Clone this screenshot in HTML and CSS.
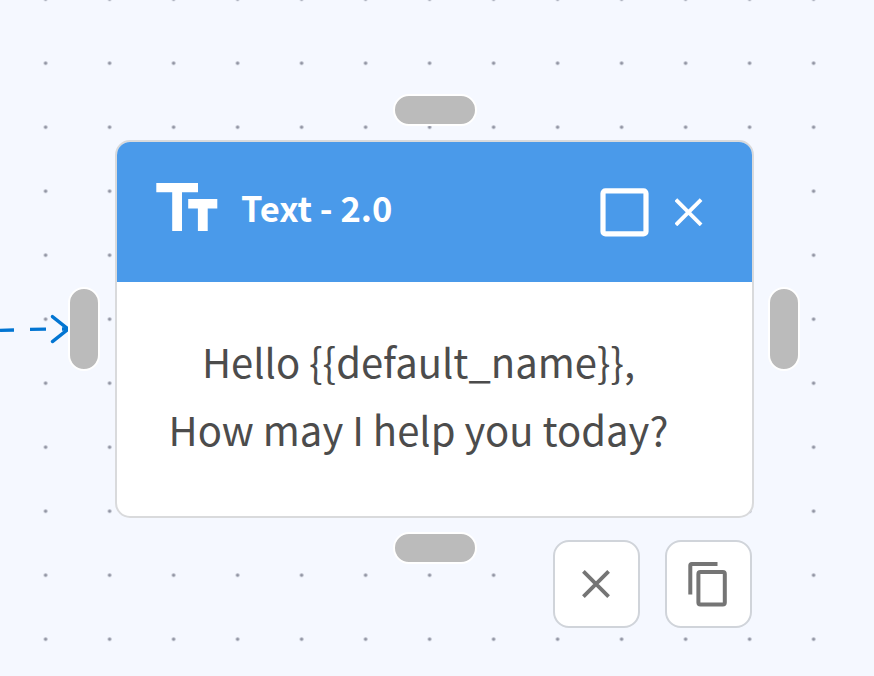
FILE: index.html
```html
<!DOCTYPE html>
<html lang="en">
<head>
  <meta charset="UTF-8">
  <title>Flow Builder</title>
  <link rel="stylesheet" href="styles.css">
</head>
<body>
  <div class="canvas">

    <!-- Background dots -->
    <svg class="grid" width="874" height="676">
      <defs>
        <pattern id="dots" x="13.6" y="31.2" width="64" height="64" patternUnits="userSpaceOnUse">
          <circle cx="32" cy="32" r="1.8" fill="#8f93a1"/>
        </pattern>
      </defs>
      <rect width="874" height="676" fill="url(#dots)"/>
    </svg>

    <!-- Incoming connection -->
    <svg class="edge" width="80" height="60" viewBox="0 300 80 60" fill="none" stroke="#0275d2" stroke-width="3.3">
      <path d="M0 330.4L14 330M30 329.4L46 329.1M62 329L69 329"/>
      <path d="M52.4 316.6L68.2 329.1L52.4 341.6" stroke-linecap="round" stroke-linejoin="round"/>
    </svg>

    <!-- Text node -->
    <div class="node">
      <div class="node-header">
        <svg class="icon-text" width="62" height="48" viewBox="0 0 62 48" fill="#fff">
          <path d="M0.3 0H42V9.3H26V48H16.2V9.3H0.3Z"/>
          <path d="M32.2 16H61.3V25.5H51.7V48H41.9V25.5H32.2Z"/>
        </svg>
        <span class="node-title">Text - 2.0</span>
        <svg class="icon-check" width="49" height="49" viewBox="0 0 49 49" fill="none" stroke="#fff" stroke-width="5.2">
          <rect x="3" y="2.9" width="43" height="43" rx="2.5"/>
        </svg>
        <svg class="icon-close" width="28" height="28" viewBox="0.5 -0.3 28 28" stroke="#fff" stroke-width="3.8">
          <path d="M1.4 1.4L26.6 26.6M26.6 1.4L1.4 26.6"/>
        </svg>
      </div>
      <div class="node-body">
        <p>Hello {{default_name}},</p>
        <p>How may I help you today?</p>
      </div>
      <div class="handle handle-top"></div>
      <div class="handle handle-right"></div>
      <div class="handle handle-bottom"></div>
      <div class="handle handle-left"></div>

      <div class="node-actions">
        <button class="action">
          <svg width="28" height="28" viewBox="0 0 28 28" stroke="#757575" stroke-width="3.8">
            <path d="M1.4 1.4L26.6 26.6M26.6 1.4L1.4 26.6"/>
          </svg>
        </button>
        <button class="action">
          <svg width="40" height="46" viewBox="0 0 40 46" fill="none" stroke="#757575" stroke-width="4">
            <path d="M2.3 33.5V4.5Q2.3 3 3.8 3H29.5"/>
            <rect x="10.4" y="11.1" width="26.4" height="32.3" rx="2"/>
          </svg>
        </button>
      </div>
    </div>

  </div>
</body>
</html>
```
FILE: styles.css
```css
body {
    margin: 0;
    font-family: "Noto Sans CJK JP", "Noto Sans", sans-serif;
}
.canvas {
    position: relative;
    width: 874px;
    height: 676px;
    background: #f5f8ff;
    overflow: hidden;
}
.grid {
    display: block;
}
.edge {
    position: absolute;
    left: 0;
    top: 300px;
}
.node {
    position: absolute;
    left: 115px;
    top: 140px;
    box-sizing: border-box;
    width: 639px;
    height: 378px;
    border: 2px solid #d9dadc;
    border-radius: 15px;
    background: #fff;
}
.node-header {
    display: flex;
    align-items: center;
    box-sizing: border-box;
    height: 140px;
    padding: 0 49px 0 39px;
    border-radius: 13px 13px 0 0;
    background: #4a9aea;
}
.icon-text {
    margin-top: -10px;
}
.node-title {
    flex: 1;
    margin: -10px 0 0 23px;
    color: #fff;
    font-size: 34.5px;
    font-weight: bold;
    line-height: 48px;
}
.icon-check {
    margin-right: 26px;
}
.node-body {
    padding: 45px 32px 0 0;
    color: #4c4c4c;
    font-size: 40px;
    line-height: 68px;
    text-align: center;
}
.node-body p {
    margin: 0;
}

/* Connection points */
.handle {
    position: absolute;
    border: 2px solid #fff;
    border-radius: 18px;
    background: #bbb;
}
.handle-top, .handle-bottom {
    left: 276px;
    width: 80px;
    height: 28px;
}
.handle-left, .handle-right {
    top: 145px;
    width: 28px;
    height: 80px;
}
.handle-top {
    top: -48px;
}
.handle-bottom {
    bottom: -48px;
}
.handle-left {
    left: -49px;
}
.handle-right {
    right: -48px;
}

/* Buttons under the node */
.node-actions {
    position: absolute;
    right: 0;
    top: 398px;
    display: flex;
    gap: 25px;
}
.action {
    display: flex;
    align-items: center;
    justify-content: center;
    box-sizing: border-box;
    width: 87px;
    height: 88px;
    padding: 0 1px 0 0;
    border: 2px solid #d0d4da;
    border-radius: 16px;
    background: #fff;
}
```
